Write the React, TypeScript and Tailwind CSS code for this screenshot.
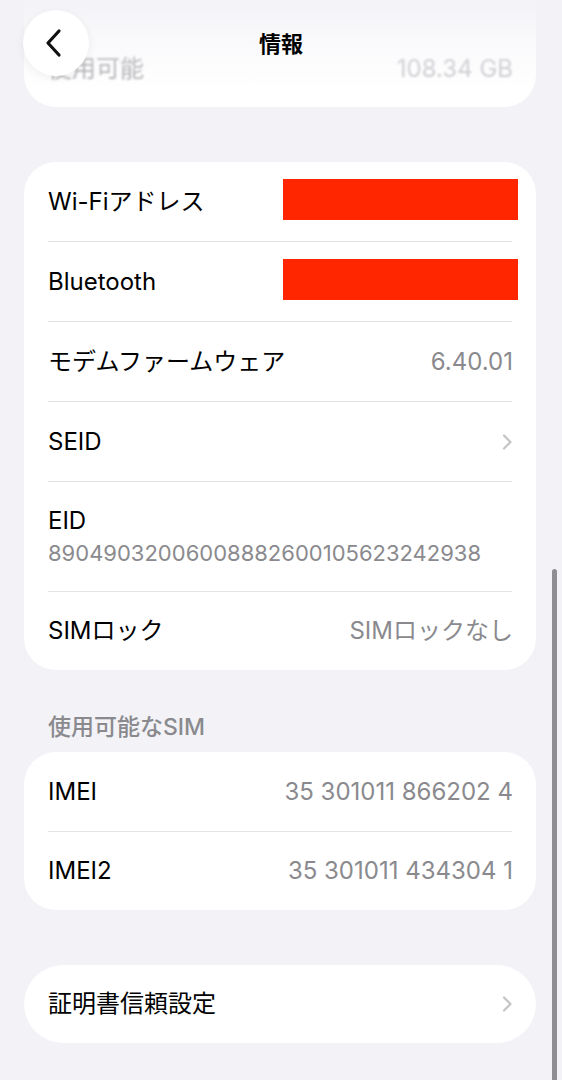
import React from 'react'

type Row = {
  label: string
  value?: string
  redacted?: boolean
  chevron?: boolean
  sub?: string
}

const mainRows: Row[] = [
  { label: 'Wi-Fiアドレス', redacted: true },
  { label: 'Bluetooth', redacted: true },
  { label: 'モデムファームウェア', value: '6.40.01' },
  { label: 'SEID', chevron: true },
  { label: 'EID', sub: '89049032006008882600105623242938' },
  { label: 'SIMロック', value: 'SIMロックなし' },
]

const simRows: Row[] = [
  { label: 'IMEI', value: '35 301011 866202 4' },
  { label: 'IMEI2', value: '35 301011 434304 1' },
]

const font = { fontFamily: 'Inter, "Noto Sans CJK JP", sans-serif' }

function Chevron() {
  return (
    <svg width="12" height="18" viewBox="0 0 12 18" fill="none">
      <path d="M3 2.5L9.5 9L3 15.5" stroke="#c4c4c7" strokeWidth="2.2" strokeLinecap="round" strokeLinejoin="round" />
    </svg>
  )
}

function ListRow({ row, last }: { row: Row; last: boolean }) {
  if (row.sub) {
    return (
      <div className="relative flex h-[110px] flex-col justify-center px-6">
        <div className="text-[24px] leading-tight text-black">{row.label}</div>
        <div className="mt-[4px] text-[22px] leading-tight text-[#8a8a8e]">{row.sub}</div>
        {!last && <div className="absolute bottom-0 left-6 right-6 h-px bg-[#e3e3e6]" />}
      </div>
    )
  }
  return (
    <div className={`relative flex items-center justify-between pl-6 pr-[23px] ${last ? 'h-[78px]' : 'h-20'}`}>
      <span className="text-[24px] text-black">{row.label}</span>
      {row.value && <span className="text-[24px] text-[#8a8a8e]">{row.value}</span>}
      {row.redacted && <div className="-mr-[5px] mb-[5px] h-[41px] w-[235px] bg-[#ff2600]" />}
      {row.chevron && <Chevron />}
      {!last && <div className="absolute bottom-0 left-6 right-6 h-px bg-[#e3e3e6]" />}
    </div>
  )
}

export default function App() {
  return (
    <main className="relative h-[1080px] overflow-hidden bg-[#f2f2f7]" style={font}>
      <div className="ml-6 mr-[26px] flex h-[107px] items-end rounded-b-[32px] bg-white">
        <div className="flex h-20 w-full items-center justify-between pl-6 pr-[23px] pt-1 blur-[0.8px]">
          <span className="text-[24px] text-[#a9a9ad]">使用可能</span>
          <span className="text-[24px] text-[#c8c8cc]">108.34 GB</span>
        </div>
      </div>

      <div className="mt-[55px] ml-6 mr-[26px] overflow-hidden rounded-[32px] bg-white">
        {mainRows.map((r, i) => (
          <ListRow key={r.label} row={r} last={i === mainRows.length - 1} />
        ))}
      </div>

      <div className="mt-[42px] ml-12 text-[23px] font-medium leading-[30px] text-[#8a8a8e]">使用可能なSIM</div>

      <div className="mt-[10px] ml-6 mr-[26px] overflow-hidden rounded-[32px] bg-white">
        {simRows.map((r, i) => (
          <ListRow key={r.label} row={r} last={i === simRows.length - 1} />
        ))}
      </div>

      <div className="mt-[55px] ml-6 mr-[26px] overflow-hidden rounded-[40px] bg-white">
        <ListRow row={{ label: '証明書信頼設定', chevron: true }} last />
      </div>

      {/* top bar overlay */}
      <div className="absolute inset-x-0 top-0 h-[90px] bg-gradient-to-b from-[#f2f2f7]/90 via-[#f2f2f7]/40 to-transparent" />
      <div className="absolute left-[23px] top-[10px] flex h-[66px] w-[66px] items-center justify-center rounded-full bg-white shadow-[0_2px_10px_rgba(0,0,0,0.06)]">
        <svg width="20" height="30" viewBox="0 0 20 30" fill="none" className="-ml-1">
          <path d="M15 3L4 15L15 27" stroke="#111" strokeWidth="3.2" strokeLinecap="round" strokeLinejoin="round" />
        </svg>
      </div>
      <div className="absolute inset-x-0 top-[28px] text-center text-[22px] font-bold text-black">情報</div>

      {/* scroll indicator */}
      <div className="absolute right-[5px] top-[569px] h-[520px] w-[5px] rounded-full bg-[#8e8e93]" />
    </main>
  )
}
